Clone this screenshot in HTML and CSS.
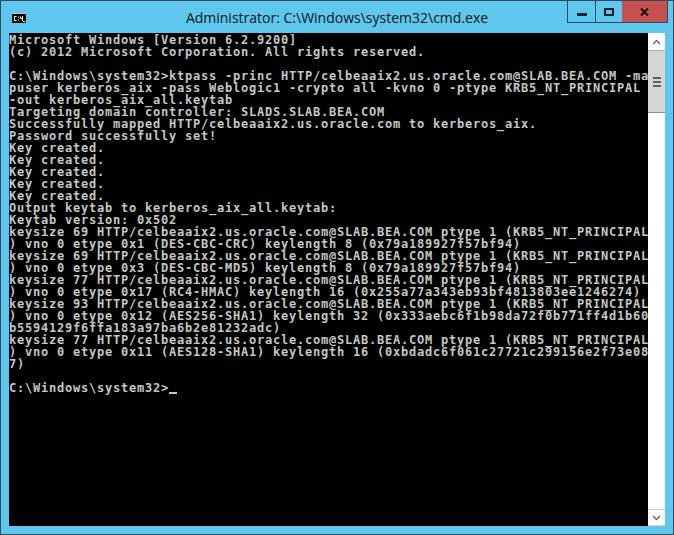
FILE: index.html
```html
<!DOCTYPE html>
<html lang="en">
<head>
<meta charset="utf-8">
<title>Administrator: C:\Windows\system32\cmd.exe</title>
<link rel="stylesheet" href="styles.css">
</head>
<body>
<div class="window">
  <header class="titlebar">
    <div class="tb-left">
      <svg class="app-icon" width="14" height="10" viewBox="0 0 14 10">
        <rect width="14" height="10" fill="#0a0a0a"/>
        <rect x="0" y="0" width="14" height="1" fill="#b8c4cc"/>
        <path d="M4.5 3.5H2.5V7.5H4.5M6.5 3.5V4.5M6.5 6.5V7.5M8.5 3.5V5.5H10.5M10.5 3V8M11 8.5H13.5" stroke="#f0f0f0" stroke-width="1" fill="none"/>
      </svg>
    </div>
    <div class="title">Administrator: C:\Windows\system32\cmd.exe</div>
    <div class="controls">
      <div class="ctl ctl-min"><span class="min-glyph"></span></div>
      <div class="ctl ctl-max"><span class="max-glyph"></span></div>
      <div class="ctl ctl-close"><svg width="9" height="8" viewBox="0 0 9 8"><path d="M1 0.5L8 7.5M8 0.5L1 7.5" stroke="#111" stroke-width="2" fill="none"/></svg></div>
    </div>
  </header>
  <div class="client">
<pre class="console">Microsoft Windows [Version 6.2.9200]
(c) 2012 Microsoft Corporation. All rights reserved.

C:\Windows\system32&gt;ktpass -princ HTTP/celbeaaix2.us.oracle.com@SLAB.BEA.COM -ma
puser kerberos_aix -pass Weblogic1 -crypto all -kvno 0 -ptype KRB5_NT_PRINCIPAL
-out kerberos_aix_all.keytab
Targeting domain controller: SLADS.SLAB.BEA.COM
Successfully mapped HTTP/celbeaaix2.us.oracle.com to kerberos_aix.
Password successfully set!
Key created.
Key created.
Key created.
Key created.
Key created.
Output keytab to kerberos_aix_all.keytab:
Keytab version: 0x502
keysize 69 HTTP/celbeaaix2.us.oracle.com@SLAB.BEA.COM ptype 1 (KRB5_NT_PRINCIPAL
) vno 0 etype 0x1 (DES-CBC-CRC) keylength 8 (0x79a189927f57bf94)
keysize 69 HTTP/celbeaaix2.us.oracle.com@SLAB.BEA.COM ptype 1 (KRB5_NT_PRINCIPAL
) vno 0 etype 0x3 (DES-CBC-MD5) keylength 8 (0x79a189927f57bf94)
keysize 77 HTTP/celbeaaix2.us.oracle.com@SLAB.BEA.COM ptype 1 (KRB5_NT_PRINCIPAL
) vno 0 etype 0x17 (RC4-HMAC) keylength 16 (0x255a77a343eb93bf4813803ee1246274)
keysize 93 HTTP/celbeaaix2.us.oracle.com@SLAB.BEA.COM ptype 1 (KRB5_NT_PRINCIPAL
) vno 0 etype 0x12 (AES256-SHA1) keylength 32 (0x333aebc6f1b98da72f0b771ff4d1b60
b5594129f6ffa183a97ba6b2e81232adc)
keysize 77 HTTP/celbeaaix2.us.oracle.com@SLAB.BEA.COM ptype 1 (KRB5_NT_PRINCIPAL
) vno 0 etype 0x11 (AES128-SHA1) keylength 16 (0xbdadc6f061c27721c299156e2f73e08
7)

C:\Windows\system32&gt;<span class="cursor"></span></pre>
    <div class="scrollbar">
      <div class="sb-btn"><svg width="9" height="6" viewBox="0 0 9 6"><path d="M1 5L4.5 1.5L8 5" stroke="#606060" stroke-width="1.3" fill="none"/></svg></div>
      <div class="sb-thumb"><span class="grip"></span><span class="grip"></span><span class="grip"></span></div>
      <div class="sb-track"></div>
      <div class="sb-btn sb-btn-down"><svg width="9" height="6" viewBox="0 0 9 6"><path d="M1 1L4.5 4.5L8 1" stroke="#606060" stroke-width="1.3" fill="none"/></svg></div>
    </div>
  </div>
</div>
</body>
</html>
```

FILE: styles.css
```css
* { box-sizing: border-box; }
html, body { margin: 0; padding: 0; background: #5fc6ee; }
body { width: 674px; height: 535px; overflow: hidden; }
.window {
  width: 674px;
  height: 535px;
  background: #5fc6ee;
  border: 1px solid #2f4a5a;
  display: flex;
  flex-direction: column;
}
.titlebar {
  height: 32px;
  flex: none;
  display: grid;
  grid-template-columns: 1fr auto 1fr;
  align-items: start;
}
.tb-left { display: flex; padding: 12px 0 0 11px; }
.app-icon { display: block; }
.title {
  margin-top: 7px;
  white-space: nowrap;
  font: 14px/20px "Open Sans", "Noto Sans", sans-serif;
  color: #0a1722;
}
.controls {
  justify-self: end;
  margin-right: 5px;
  display: flex;
  height: 22px;
  border: 1px solid #2f4a5a;
  border-top: 0;
}
.ctl { display: flex; align-items: center; justify-content: center; height: 21px; }
.ctl-min { width: 28px; border-right: 1px solid #2f4a5a; }
.ctl-max { width: 26px; }
.ctl-close { width: 45px; background: #c75050; }
.min-glyph { width: 10px; height: 3px; background: #10202c; margin-top: 5px; }
.max-glyph { width: 10px; height: 8px; border: 2px solid #10202c; }
.client { flex: 1; display: flex; min-height: 0; margin: 0 8px 8px; }
.console {
  flex: 1;
  margin: 0;
  background: #000;
  color: #c6c6c6;
  font: bold 12px/12px "DejaVu Sans Mono", "Liberation Mono", monospace;
  letter-spacing: 0.775px;
  padding: 1px 0 0 0;
  overflow: hidden;
  white-space: pre;
}
.cursor { display: inline-block; width: 8px; height: 2px; background: #c6c6c6; vertical-align: -2px; }
.scrollbar {
  width: 17px;
  flex: none;
  display: flex;
  flex-direction: column;
  background: #fff;
}
.sb-btn { height: 17px; background: #fff; display: flex; align-items: center; justify-content: center; flex: none; }
.sb-btn-down { border-top: 1px solid #c8c8c8; border-bottom: 1px solid #d8d8d8; }
.sb-thumb {
  height: 63px;
  flex: none;
  background: #d6d6d6;
  border-top: 1px solid #b0b0b0;
  border-bottom: 1px solid #8f8f8f;
  display: flex;
  flex-direction: column;
  align-items: center;
  justify-content: center;
  gap: 2px;
}
.grip { width: 8px; height: 2px; background: #606060; }
.sb-track { flex: 1; background: #fff; }
```
